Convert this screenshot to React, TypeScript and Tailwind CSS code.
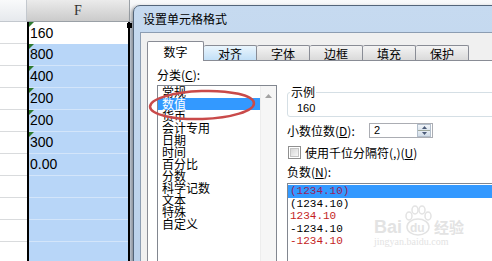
import React from "react";

function GreenTri() {
  return (
    <svg className="absolute left-0 top-0" width="5" height="5">
      <polygon points="0,0 5,0 0,5" fill="#2e7a30" />
    </svg>
  );
}

export default function App() {
  const cells = ["160", "800", "400", "200", "200", "300", "0.00", "", "", "", ""];
  const cats = ["常规", "数值", "货币", "会计专用", "日期", "时间", "百分比", "分数", "科学记数", "文本", "特殊", "自定义"];
  const negs = [
    { t: "(1234.10)", c: "text-[#9a1f5c]", sel: true },
    { t: "(1234.10)", c: "text-black", sel: false },
    { t: "1234.10", c: "text-[#c41e1e]", sel: false },
    { t: "-1234.10", c: "text-black", sel: false },
    { t: "-1234.10", c: "text-[#c41e1e]", sel: false },
  ];
  const tabs = [
    { t: "对齐", cls: "bg-gradient-to-b from-[#eaf5fd] to-[#bfdef6]" },
    { t: "字体", cls: "bg-gradient-to-b from-[#f4f4f4] to-[#d8d8d8]" },
    { t: "边框", cls: "bg-gradient-to-b from-[#f4f4f4] to-[#d8d8d8]" },
    { t: "填充", cls: "bg-gradient-to-b from-[#f4f4f4] to-[#d8d8d8]" },
    { t: "保护", cls: "bg-gradient-to-b from-[#f4f4f4] to-[#d8d8d8]" },
  ];

  return (
    <div className="relative w-[492px] h-[261px] overflow-hidden bg-white text-black [font-family:'Noto_Sans_CJK_SC',sans-serif]">
      {/* spreadsheet */}
      <div className="flex flex-col">
        <div className="flex h-[22px]">
          <div className="w-[27px] h-full border-r border-b border-[#c3c8ce] bg-gradient-to-b from-[#f9fafb] to-[#e6e9ed]" />
          <div className="w-[103px] h-full border-r border-b border-[#9aa0a6] bg-gradient-to-b from-[#ebebeb] to-[#cbcbcb] flex items-center justify-center text-[14px] text-[#333] [font-family:'Liberation_Serif',serif]">
            F
          </div>
          <div className="flex-1 h-full border-b border-[#c3c8ce] bg-gradient-to-b from-[#f9fafb] to-[#e6e9ed]" />
        </div>
        <div className="flex">
          <div className="w-[27px] flex flex-col">
            {cells.map((_, i) => (
              <div key={i} className="h-[22px] border-b border-[#d9dbdd]" />
            ))}
          </div>
          <div className="relative w-[103px] border-x-2 border-black flex flex-col text-[14px] [font-family:'Liberation_Sans',sans-serif]">
            {cells.map((v, i) => (
              <div
                key={i}
                className={
                  i === 0
                    ? "relative h-[22px] pl-[1px] flex items-center bg-white"
                    : "relative h-[22px] pl-[1px] flex items-center bg-[#b8d6f8] border-b border-[#d3e5fa]"
                }
              >
                {i < 6 && <GreenTri />}
                {v}
              </div>
            ))}
          </div>
          <div className="flex-1 bg-[#c9d2de]" />
        </div>
      </div>
      <div className="absolute left-[127px] top-[23px] w-[5px] h-[5px] bg-black" />

      {/* dialog window */}
      <div className="absolute left-[133px] top-[5px] w-[400px] h-[300px] rounded-tl-[7px] border border-[#53657a] bg-gradient-to-b from-[#c6daf0] to-[#b9d0ea] flex flex-col shadow-[-2px_1px_3px_rgba(0,0,0,0.3)]">
        <div className="h-[26px] shrink-0 pl-[9px] flex items-center text-[12px] leading-[12px]">设置单元格格式</div>
        <div className="flex-1 ml-[6px] border-l border-t border-[#8c9db2] bg-[#f0f0f0] pl-[6px] pt-[8px] flex flex-col">
          <div className="flex items-end h-[20px] shrink-0 text-[12px] leading-[12px]">
            <div className="relative z-10 w-[57px] h-[20px] bg-white border-x border-t border-[#898c95] rounded-t-[2px] flex items-center justify-center">
              数字
            </div>
            {tabs.map((tb) => (
              <div
                key={tb.t}
                className={
                  "w-[53px] h-[16px] border-r border-t border-[#898c95] rounded-t-[2px] flex items-center justify-center " + tb.cls
                }
              >
                {tb.t}
              </div>
            ))}
          </div>
          <div className="flex-1 -mt-px bg-white border-l border-t border-[#898c95] flex">
            {/* category column */}
            <div className="w-[120px] ml-[9px] pt-[8px] flex flex-col shrink-0 text-[12px] leading-[12px]">
              <div className="h-[12px]">
                分类(<span className="underline">C</span>):
              </div>
              <div className="mt-[4px] h-[200px] border border-[#828790] flex">
                <div className="flex-1 flex flex-col">
                  {cats.map((c, i) => (
                    <div
                      key={c}
                      className={
                        i === 1
                          ? "h-[12px] leading-[12px] pl-[4px] bg-[#3399ff] text-white"
                          : "h-[12px] leading-[12px] pl-[4px]"
                      }
                    >
                      {c}
                    </div>
                  ))}
                </div>
                <div className="w-[16px] bg-[#f6f6f6] border-l border-[#ededed] flex justify-center pt-[8px]">
                  <svg width="7" height="4">
                    <polygon points="0,4 3.5,0 7,4" fill="#a3a3a3" />
                  </svg>
                </div>
              </div>
            </div>

            {/* right column */}
            <div className="ml-[10px] flex-1 pt-[31px] flex flex-col text-[12px] leading-[12px]">
              <div className="relative h-[25px] w-[260px] border border-[#d5dfe5] rounded-[3px] pl-[9px] pt-[9px] text-[11px] leading-[12px] [font-family:'Liberation_Sans',sans-serif]">
                <span className="absolute left-[2px] top-[-7px] bg-white px-[1px] text-[12px] leading-[12px] [font-family:'Noto_Sans_CJK_SC',sans-serif]">
                  示例
                </span>
                160
              </div>

              <div className="mt-[6px] flex items-center h-[15px]">
                <div className="w-[82px]">
                  小数位数(<span className="underline">D</span>):
                </div>
                <div className="w-[64px] h-[15px] border border-[#abadb3] bg-white flex">
                  <div className="flex-1 pl-[4px] leading-[13px] text-[11px] [font-family:'Liberation_Sans',sans-serif]">2</div>
                  <div className="w-[14px] mr-px flex flex-col border border-[#b3bfcc]">
                    <div className="flex-1 flex items-center justify-center bg-gradient-to-b from-[#f1f5f9] to-[#dbe4ed] border-b border-[#9fa89c]">
                      <svg width="5" height="3">
                        <polygon points="0,3 2.5,0 5,3" fill="#4a5a78" />
                      </svg>
                    </div>
                    <div className="flex-1 flex items-center justify-center bg-gradient-to-b from-[#e6edf4] to-[#d2dde8]">
                      <svg width="5" height="3">
                        <polygon points="0,0 5,0 2.5,3" fill="#4a5a78" />
                      </svg>
                    </div>
                  </div>
                </div>
              </div>

              <div className="mt-[8px] flex items-center h-[13px]">
                <div className="ml-px w-[13px] h-[13px] border border-[#8f8f8f] bg-white p-[1px]">
                  <div className="w-full h-full border border-[#c4c4c4] bg-gradient-to-br from-[#d6d6d6] to-[#f7f7f7]" />
                </div>
                <div className="ml-[4px]">
                  使用千位分隔符(,)(<span className="underline">U</span>)
                </div>
              </div>

              <div className="mt-[7px] h-[12px]">
                负数(<span className="underline">N</span>):
              </div>

              <div className="mt-[5px] h-[100px] w-[260px] border border-[#828790] pt-px flex flex-col text-[11px] [font-family:'Liberation_Mono',monospace]">
                {negs.map((n, i) => (
                  <div
                    key={i}
                    className={
                      (n.sel ? "bg-[#3399ff] " : "") + "h-[12.5px] leading-[12.5px] pl-[2px] " + n.c
                    }
                  >
                    {n.t}
                  </div>
                ))}
              </div>
            </div>
          </div>
        </div>
      </div>

      {/* red annotation ellipse */}
      <svg className="absolute left-[146px] top-[86px] pointer-events-none" width="112" height="38">
        <ellipse cx="56" cy="19" rx="52" ry="14" fill="none" stroke="#c94a4a" strokeWidth="2.5" transform="rotate(-2 56 19)" />
      </svg>

      {/* watermark */}
      <div className="absolute left-[374px] top-[204px] text-[#e3e3e3] pointer-events-none">
        <div className="flex items-end h-[32px]">
          <span className="text-[18px] leading-[18px] font-bold [font-family:'Liberation_Sans',sans-serif]">Bai</span>
          <svg width="30" height="32" className="mx-px">
            <ellipse cx="6" cy="12" rx="3" ry="4" fill="none" stroke="#e3e3e3" strokeWidth="1.5" />
            <ellipse cx="12" cy="6" rx="3" ry="4" fill="none" stroke="#e3e3e3" strokeWidth="1.5" />
            <ellipse cx="19" cy="6" rx="3" ry="4" fill="none" stroke="#e3e3e3" strokeWidth="1.5" />
            <ellipse cx="25" cy="12" rx="3" ry="4" fill="none" stroke="#e3e3e3" strokeWidth="1.5" />
            <ellipse cx="15" cy="23" rx="11" ry="8" fill="none" stroke="#e3e3e3" strokeWidth="1.5" />
            <text x="7" y="28" fontSize="12" fontWeight="bold" fill="#e3e3e3" fontFamily="Liberation Sans">du</text>
          </svg>
          <span className="text-[15px] leading-[18px] font-bold">经验</span>
        </div>
        <div className="text-[10px] leading-[12px] [font-family:'Liberation_Serif',serif]">jingyan.baidu.com</div>
      </div>
    </div>
  );
}
